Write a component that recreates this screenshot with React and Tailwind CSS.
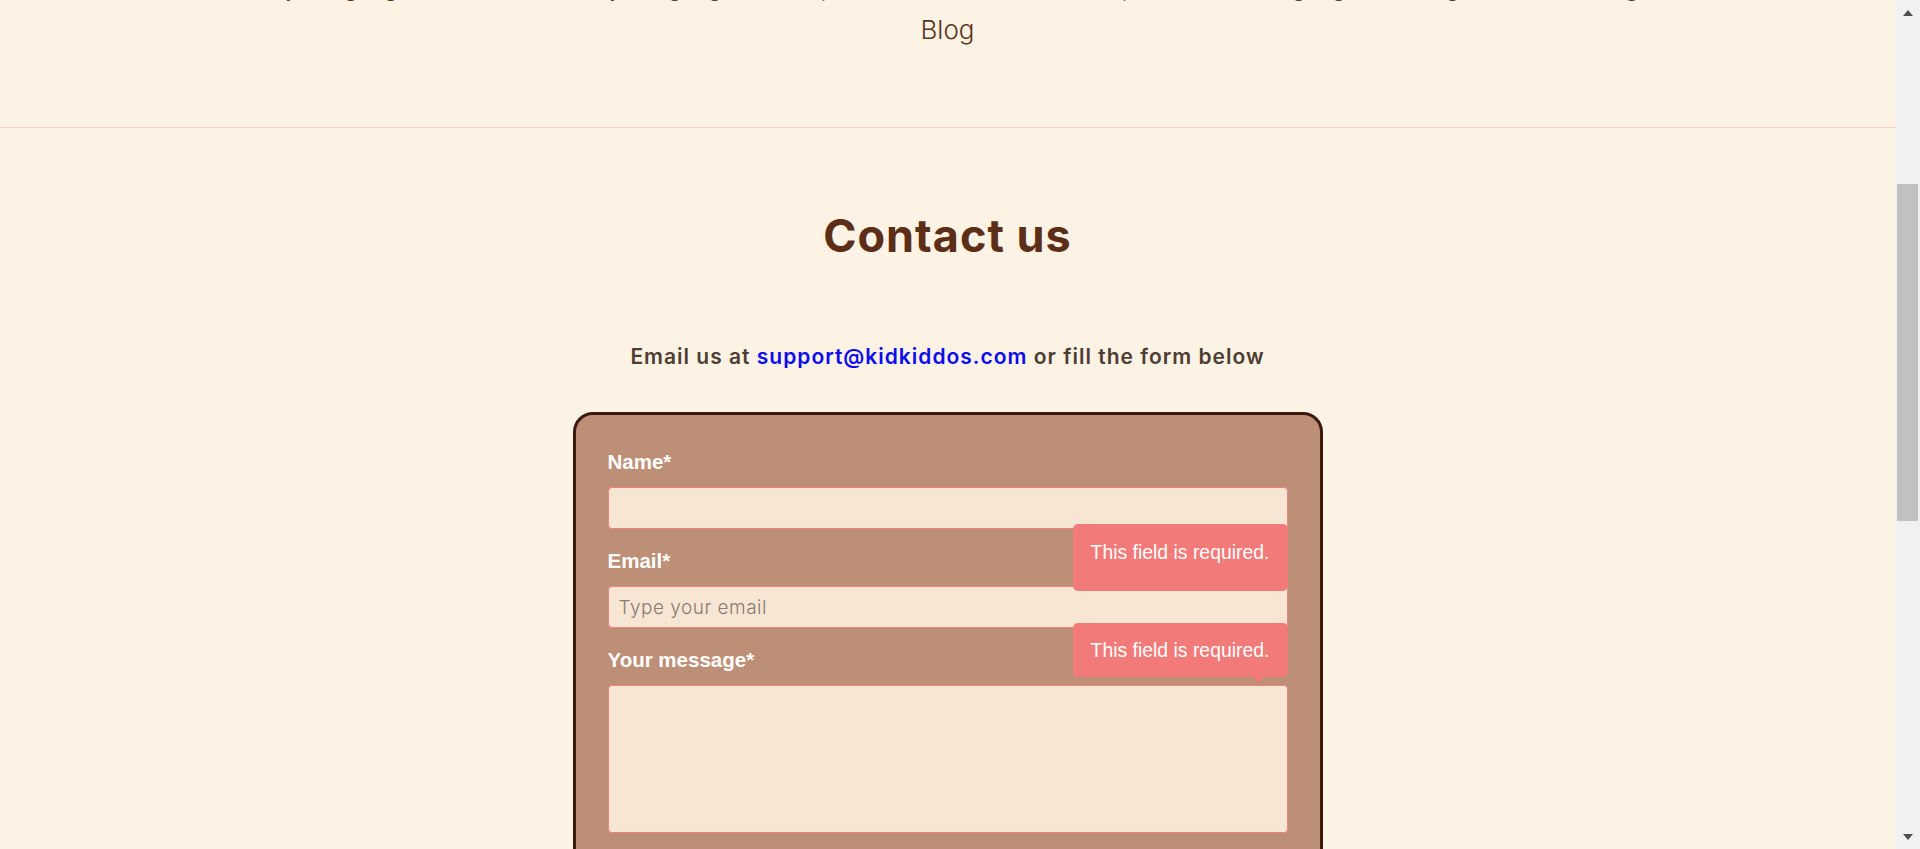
import React from "react";

const navItems = [
  "Kids Books by Language",
  "Audio Books by Language",
  "Shop",
  "Français",
  "日本語 (Japanese)",
  "Language Learning",
  "Free Printing",
];

function Field({ label, children, tooltip }) {
  return (
    <div className="relative mb-[20px]">
      <label className="block mb-[13px] text-[20.5px] leading-[24px] font-bold text-white font-['Liberation_Sans',Arial,sans-serif]">
        {label}
      </label>
      {children}
      {tooltip}
    </div>
  );
}

function Tooltip({ tall, arrow }) {
  return (
    <div
      className={
        "absolute right-0 top-[74px] z-10 w-[215px] rounded-[5px] bg-[#f27b79] text-center text-white text-[19.4px] leading-[24px] font-['Liberation_Sans',Arial,sans-serif] " +
        (tall ? "h-[67px] pt-[16px]" : "h-[54px] pt-[15px]")
      }
    >
      This field is required.
      {arrow && (
        <span className="absolute top-full right-[24px] h-0 w-0 border-l-[6px] border-r-[6px] border-t-[6px] border-l-transparent border-r-transparent border-t-[#f27b79]" />
      )}
    </div>
  );
}

export default function App() {
  return (
    <div className="flex h-[849px] w-full overflow-hidden bg-[#fdf3e5] font-['Inter',sans-serif]">
      <main className="flex min-w-0 flex-1 flex-col overflow-hidden">
        <section className="h-[128px] shrink-0 border-b border-[#f8d2bf] overflow-hidden">
          <div className="-mt-[32px] mb-[2px] flex justify-center gap-x-[44px] pr-[110px] whitespace-nowrap text-[23px] leading-[40px] font-light text-[#5b3520]">
            {navItems.map((t) => (
              <span key={t}>{t}</span>
            ))}
          </div>
          <div className="text-center text-[26px] leading-[40px] font-light text-[#5b3520]">
            Blog
          </div>
        </section>

        <section className="flex shrink-0 flex-col items-center">
          <h2 className="mt-[85px] text-[45px] leading-[45px] font-bold tracking-[1px] text-[#5c2d17]">
            Contact us
          </h2>
          <p className="mt-[87px] text-[21px] leading-[24px] font-semibold tracking-[1px] text-[#4d3d33]">
            Email us at{" "}
            <a className="text-[#0b0bf0]" href="#">
              support@kidkiddos.com
            </a>{" "}
            or fill the form below
          </p>

          <form className="mt-[43px] w-[750px] h-[520px] shrink-0 rounded-[20px] border-[3px] border-[#3a1a0c] bg-[#bd8f77] px-[32px] pt-[35px]">
            <Field label="Name*" tooltip={<Tooltip tall />}>
              <input className="block h-[42px] w-full rounded-[4px] border border-[#f4837c] bg-[#f8e6d4] px-[10px] outline-none" />
            </Field>
            <Field label="Email*" tooltip={<Tooltip arrow />}>
              <input
                placeholder="Type your email"
                className="block h-[42px] w-full rounded-[4px] border border-[#f4837c] bg-[#f8e6d4] px-[10px] text-[19px] tracking-[0.5px] font-light outline-none placeholder:text-[#8a7a70]"
              />
            </Field>
            <Field label="Your message*">
              <textarea className="block h-[148px] w-full resize-none rounded-[4px] border border-[#f4837c] bg-[#f8e6d4] px-[10px] outline-none" />
            </Field>
          </form>
        </section>
      </main>

      <div className="flex w-[25px] shrink-0 flex-col items-center bg-[#f1f1f1]">
        <div className="flex h-[25px] w-full items-center justify-center">
          <span className="h-0 w-0 border-l-[5px] border-r-[5px] border-b-[6px] border-l-transparent border-r-transparent border-b-[#505050]" />
        </div>
        <div className="h-[159px]" />
        <div className="h-[337px] w-[21px] bg-[#c1c1c1]" />
        <div className="flex-1" />
        <div className="flex h-[25px] w-full items-center justify-center">
          <span className="h-0 w-0 border-l-[5px] border-r-[5px] border-t-[6px] border-l-transparent border-r-transparent border-t-[#505050]" />
        </div>
      </div>
    </div>
  );
}
